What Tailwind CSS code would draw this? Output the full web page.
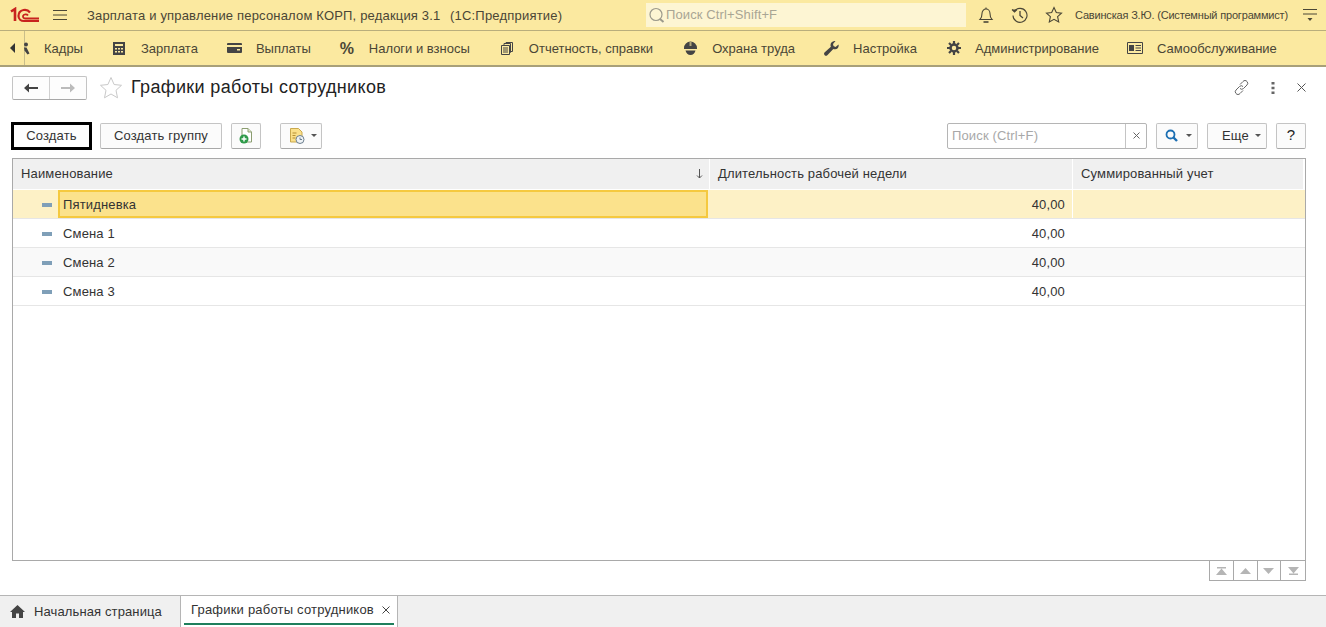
<!DOCTYPE html>
<html lang="ru">
<head>
<meta charset="UTF-8">
<title>Графики работы сотрудников</title>
<script src="https://cdn.jsdelivr.net/npm/@tailwindcss/browser@4"></script>
</head>
<body class="w-[1326px] h-[627px] overflow-hidden bg-white font-['Liberation_Sans',Arial,sans-serif] text-[13px] text-[#333] flex flex-col">

<!-- top bar -->
<header class="h-[31px] shrink-0 bg-[#fbe9a0] border-b border-[#b9ae7c] flex items-center text-[#4a4636]">
  <svg class="ml-[10px] w-[30px] h-[16px]" viewBox="0 0 30 16" fill="none"><path d="M1 4.500 5 2v12" stroke="#c8231e" stroke-width="2.600"/><path d="M20 5.500C18.500 3.500 16 2.500 13.500 3 10.500 3.600 8.500 6 8.500 9c0 3 2.500 5 5.500 5h15" stroke="#c8231e" stroke-width="2.200"/><path d="M18 8.500c-1-1.500-4.500-1.500-5 .5-.3 1.500 1 2.500 2.500 2.500H29" stroke="#c8231e" stroke-width="1.800"/></svg>
  <svg class="ml-[12px] w-[16px] h-[12px]" viewBox="0 0 16 12" stroke="#4a4636" stroke-width="1"><path d="M1 1.500h14M1 6h14M1 10.500h14"/></svg>
  <span class="ml-[19px] w-[353px] pt-[2px] whitespace-nowrap tracking-[0.18px]">Зарплата и управление персоналом КОРП, редакция 3.1</span>
  <span class="ml-[10px] w-[196px] pt-[2px] whitespace-nowrap tracking-[0.2px]">(1С:Предприятие)</span>
  <div class="w-[320px] h-[24px] bg-[#fdf5d3] flex items-center text-[#a9a594] tracking-[0.12px]">
    <svg class="ml-[2px] w-[17px] h-[17px]" viewBox="0 0 17 17" fill="none"><circle cx="8" cy="7.500" r="6" stroke="#9c9a8c" stroke-width="1.200"/><path d="m12 12 3.500 3" stroke="#9c9a8c" stroke-width="2"/></svg>
    <span class="ml-[1px]">Поиск Ctrl+Shift+F</span>
  </div>
  <svg class="ml-[11px] w-[18px] h-[18px]" viewBox="0 0 18 18" fill="none" stroke="#4a4636" stroke-width="1.100"><path d="M3 13.500c1.500-1.500 2-3 2-6 0-2.500 1.800-4.500 4-4.500s4 2 4 4.500c0 3 .5 4.500 2 6z"/><path d="M9 1.500V3"/><path d="M6.500 16h5" stroke-width="1.600"/></svg>
  <svg class="ml-[16px] w-[18px] h-[18px]" viewBox="0 0 18 18" fill="none" stroke="#4a4636" stroke-width="1.100"><path d="M3.500 5A7 7 0 1 1 2 9.500"/><path d="M1 3.500 3.500 6 6 3.500" fill="#4a4636"/><path d="M9 5v4.500l3 2.500" stroke-width="1.300"/></svg>
  <svg class="ml-[16px] w-[18px] h-[18px]" viewBox="0 0 18 18" fill="none" stroke="#4a4636" stroke-width="1.100"><path d="m9 1.500 2.300 5 5.200.6-3.900 3.500 1.100 5.400L9 13.300 4.300 16l1.100-5.400L1.500 7.100l5.200-.6z"/></svg>
  <span class="ml-[12px] w-[215px] pt-[1px] text-[11px] whitespace-nowrap tracking-[-0.18px]">Савинская З.Ю. (Системный программист)</span>
  <svg class="ml-[12px] w-[16px] h-[14px]" viewBox="0 0 16 14"><path d="M1 1.500h14M1 6h14" stroke="#4a4636" fill="none"/><path d="m5.500 10 2.500 3 2.500-3z" fill="#4a4636"/></svg>
</header>

<!-- sections bar -->
<nav class="h-[36px] shrink-0 bg-[#fbe9a0] border-b-2 border-[#a8a079] flex items-center text-[#4a4636] whitespace-nowrap">
  <div class="w-[25px] h-full border-r border-[#c9be8a] flex items-center relative">
    <svg class="ml-[10px] w-[6px] h-[10px]" viewBox="0 0 6 10"><path d="M5 0v10L0 5z" fill="#333"/></svg>
    <svg class="absolute left-[24px] top-[11px] w-[6px] h-[13px]" viewBox="0 0 6 13"><circle cx="2" cy="2.500" r="2" fill="#444"/><path d="M0 5.500h2.500l3 6-2 1-3-4z" fill="#444"/></svg>
  </div>
  <span class="ml-[19px] pt-[2px]">Кадры</span>
  <svg class="ml-[30px] w-[12px] h-[13px]" viewBox="0 0 12 13"><path fill="#444" d="M0 0h12v13H0z"/><path fill="#fbe9a0" d="M2 2h8v2H2zM2 6h2v1.500H2zM5 6h2v1.500H5zM8 6h2v1.500H8zM2 9h2v1.500H2zM5 9h2v1.500H5zM8 9h2v1.500H8z"/></svg>
  <span class="ml-[16px] pt-[2px]">Зарплата</span>
  <svg class="ml-[29px] w-[15px] h-[10px]" viewBox="0 0 15 10"><path fill="#444" d="M0 1a1 1 0 0 1 1-1h13a1 1 0 0 1 1 1v1H0zM0 4h15v5a1 1 0 0 1-1 1H1a1 1 0 0 1-1-1z"/><path fill="#fbe9a0" d="M10 6h3v1.500h-3z"/></svg>
  <span class="ml-[14px] pt-[2px]">Выплаты</span>
  <span class="ml-[29px] w-[15px] pt-[2px] text-[16px] font-bold">%</span>
  <span class="ml-[14px] pt-[2px]">Налоги и взносы</span>
  <svg class="ml-[31px] w-[12px] h-[13px]" viewBox="0 0 12 13" fill="none" stroke="#444"><path d="M.5 3.500h8v9h-8zM3 3.500v-2h6.500v9H8.500M5 1.500V.5h6.500v9h-2M2 6h5M2 8h5M2 10h5"/></svg>
  <span class="ml-[16px] pt-[2px]">Отчетность, справки</span>
  <svg class="ml-[31px] w-[13px] h-[14px]" viewBox="0 0 13 14"><path fill="#444" d="M0 7a6.500 6.500 0 0 1 13 0v1H0zM1.500 9.500h10C11 12 9 14 6.500 14s-4.500-2-5-4.500z"/><path fill="#fbe9a0" d="M5.500 1h2v4h-2z" opacity=".6"/></svg>
  <span class="ml-[15px] pt-[2px]">Охрана труда</span>
  <svg class="ml-[29px] w-[15px] h-[15px]" viewBox="0 0 15 15"><path fill="#444" d="M14.500 3.500 11.500 6 9.500 5 9 3l2.500-3C9 -.3 6.500 1.500 6.500 4c0 .7.100 1.200.4 1.800L.5 11.500c-.8 1-.5 2.200.2 2.800.8.700 1.800.7 2.600 0l6-6.200c.7.200 1.200.3 1.900.2 2.500-.3 4-2.500 3.300-4.800z"/></svg>
  <span class="ml-[14px] pt-[2px]">Настройка</span>
  <svg class="ml-[30px] w-[14px] h-[14px]" viewBox="0 0 14 14"><circle cx="7" cy="7" r="3.500" fill="none" stroke="#444" stroke-width="2.500"/><path stroke="#444" stroke-width="2.200" d="M7 0v3M7 11v3M0 7h3M11 7h3M2 2l2 2M10 10l2 2M12 2l-2 2M4 10l-2 2"/></svg>
  <span class="ml-[14px] pt-[2px]">Администрирование</span>
  <svg class="ml-[28px] w-[16px] h-[12px]" viewBox="0 0 16 12" fill="none" stroke="#444"><path d="M.5.500h15v11H.5z"/><path fill="#444" stroke="none" d="M2 3h5v6H2z"/><path d="M8.500 3.500h5.500M8.500 6h5.500M8.500 8.500h5.500"/></svg>
  <span class="ml-[14px] pt-[2px]">Самообслуживание</span>
</nav>

<main class="flex-1 min-h-0 flex flex-col">
  <!-- title row -->
  <div class="h-[41px] shrink-0 flex items-center pl-[12px] pr-[20px]">
    <div class="w-[75px] h-[24px] border border-[#c4c4c4] border-b-[#a8a8a8] rounded-[2px] flex bg-[#fdfdfd]">
      <div class="w-[37px] flex items-center justify-center border-r border-[#d0d0d0]">
        <svg class="w-[14px] h-[10px]" viewBox="0 0 14 10"><path d="M0 5 5 .5V4h9v2H5v3.500z" fill="#444"/></svg>
      </div>
      <div class="flex-1 flex items-center justify-center">
        <svg class="w-[14px] h-[10px]" viewBox="0 0 14 10"><path d="M14 5 9 .5V4H0v2h9v3.500z" fill="#bbb"/></svg>
      </div>
    </div>
    <svg class="ml-[12px] w-[24px] h-[24px]" viewBox="0 0 24 24" fill="none" stroke="#c9c9c9"><path d="m12 1.500 3.100 7 7.400.8-5.500 5 1.500 7.500L12 18l-6.500 3.800L7 14.300l-5.500-5 7.400-.8z"/></svg>
    <h1 class="ml-[8px] text-[18px] text-[#222] whitespace-nowrap tracking-[0.35px]">Графики работы сотрудников</h1>
    <svg class="ml-auto w-[17px] h-[17px]" viewBox="0 0 17 17" fill="none" stroke="#666"><path d="M7 5.500 10 2.500a2.500 2.500 0 0 1 4 0 2.500 2.500 0 0 1 0 3.500l-3.500 3.500a2.500 2.500 0 0 1-3.500 0"/><path d="M10 11.500 7 14.500a2.500 2.500 0 0 1-4 0 2.500 2.500 0 0 1 0-3.500L6.500 7.500a2.500 2.500 0 0 1 3.500 0"/></svg>
    <svg class="ml-[21px] w-[4px] h-[12px]" viewBox="0 0 4 12"><path fill="#666" d="M.5 0h3v2.500h-3zM.5 4.700h3v2.500h-3zM.5 9.500h3V12h-3z"/></svg>
    <svg class="ml-[22px] w-[9px] h-[9px]" viewBox="0 0 9 9" stroke="#555"><path d="m.5.500 8 8M8.500.500l-8 8"/></svg>
  </div>

  <!-- toolbar -->
  <div class="h-[27px] mt-[14px] shrink-0 flex items-center pl-[11px] pr-[20px] tracking-[0.15px]">
    <button class="w-[81px] h-[28px] border-[3px] border-black bg-[#fdfdfd] text-[#333]">Создать</button>
    <button class="ml-[8px] w-[122px] h-[26px] border border-[#c4c4c4] border-b-[#a8a8a8] rounded-[2px] bg-[#fbfbfb]">Создать группу</button>
    <button class="ml-[9px] w-[30px] h-[26px] border border-[#c4c4c4] border-b-[#a8a8a8] rounded-[2px] bg-[#fbfbfb] flex items-center justify-center">
      <svg class="w-[14px] h-[16px]" viewBox="0 0 14 16"><path d="M3 .5h6l3.500 3.500v10H3z" fill="#fff" stroke="#8b9d70"/><path d="M9 .5V4h3.500" fill="#dfe8c8" stroke="#8b9d70"/><circle cx="5" cy="11" r="4.500" fill="#2e9a49"/><path d="M5 8.500v5M2.500 11h5" stroke="#fff" stroke-width="1.400"/></svg>
    </button>
    <button class="ml-[19px] w-[42px] h-[26px] border border-[#c4c4c4] border-b-[#a8a8a8] rounded-[2px] bg-[#fbfbfb] flex items-center pl-[8px]">
      <svg class="w-[16px] h-[16px]" viewBox="0 0 16 16"><path d="M1.500.5h8L13 4v10H1.500z" fill="#fbe08a" stroke="#c9a94e"/><path d="M3.500 5h4M3.500 7.500h3M3.500 10h3" stroke="#b58f35"/><circle cx="11" cy="11.500" r="4" fill="#eef2f5" stroke="#6d7f8f"/><path d="M11 9.500v2h2" fill="none" stroke="#6d7f8f"/></svg>
      <svg class="ml-[6px] w-[6px] h-[3px]" viewBox="0 0 6 3"><path d="M0 0h6L3 3z" fill="#555"/></svg>
    </button>
    <div class="ml-auto w-[200px] h-[26px] border border-[#b5b5b5] rounded-[2px] flex items-center">
      <span class="flex-1 pl-[4px] text-[#a8a8a8]">Поиск (Ctrl+F)</span>
      <span class="w-[21px] h-full border-l border-[#c4c4c4] flex items-center justify-center">
        <svg class="w-[7px] h-[7px]" viewBox="0 0 7 7" stroke="#666"><path d="m.5.500 6 6M6.500.500l-6 6"/></svg>
      </span>
    </div>
    <button class="ml-[9px] w-[42px] h-[26px] border border-[#c4c4c4] border-b-[#a8a8a8] rounded-[2px] bg-[#fbfbfb] flex items-center pl-[8px]">
      <svg class="w-[13px] h-[13px]" viewBox="0 0 13 13" fill="none" stroke="#1c6fb3"><circle cx="5.500" cy="5.500" r="4" stroke-width="1.800"/><path d="m8.500 8.500 3.500 3.500" stroke-width="2.400"/></svg>
      <svg class="ml-[8px] w-[6px] h-[3px]" viewBox="0 0 6 3"><path d="M0 0h6L3 3z" fill="#555"/></svg>
    </button>
    <button class="ml-[9px] w-[60px] h-[26px] border border-[#c4c4c4] border-b-[#a8a8a8] rounded-[2px] bg-[#fbfbfb] flex items-center pl-[14px]">
      <span>Еще</span>
      <svg class="ml-[6px] w-[6px] h-[3px]" viewBox="0 0 6 3"><path d="M0 0h6L3 3z" fill="#555"/></svg>
    </button>
    <button class="ml-[9px] w-[30px] h-[26px] border border-[#c4c4c4] border-b-[#a8a8a8] rounded-[2px] bg-[#fbfbfb] text-[15px] text-[#222]">?</button>
  </div>

  <!-- table -->
  <div class="ml-[12px] mr-[20px] mt-[9px] h-[403px] shrink-0 border border-[#a9a9a9] flex flex-col tracking-[0.15px]">
    <div class="h-[31px] shrink-0 grid grid-cols-[697px_363px_1fr] bg-[#f0f0f0] border-b border-white">
      <div class="flex items-center pl-[8px] pr-[6px] border-r border-white">Наименование
        <svg class="ml-auto w-[7px] h-[10px]" viewBox="0 0 7 10" fill="none" stroke="#555"><path d="M3.500 0v9M1 6.500 3.500 9 6 6.500"/></svg>
      </div>
      <div class="flex items-center pl-[8px] border-r border-white">Длительность рабочей недели</div>
      <div class="flex items-center pl-[8px] border-r-2 border-white">Суммированный учет</div>
    </div>

    <div class="h-[29px] shrink-0 grid grid-cols-[697px_363px_1fr] bg-[#fdf1c6] border-b border-[#e6e6e6]">
      <div class="flex items-center pl-[29px]">
        <span class="w-[10px] h-[4px] mt-[2px] bg-[#7f9fb8] mr-[6px]"></span>
        <span class="h-full flex-1 bg-[#fbe28c] border-2 border-[#f5c93f] flex items-center pl-[2px] pt-[2px] mr-[2px] indent-px">Пятидневка</span>
      </div>
      <div class="flex items-center justify-end pt-[2px] pr-[7px] border-r border-white">40,00</div>
      <div></div>
    </div>
    <div class="h-[29px] shrink-0 grid grid-cols-[697px_363px_1fr] border-b border-[#e6e6e6]">
      <div class="flex items-center pt-[2px] pl-[29px]"><span class="w-[10px] h-[4px] bg-[#7f9fb8] mr-[11px]"></span>Смена 1</div>
      <div class="flex items-center justify-end pt-[2px] pr-[8px]">40,00</div>
      <div></div>
    </div>
    <div class="h-[29px] shrink-0 grid grid-cols-[697px_363px_1fr] bg-[#f9f9f9] border-b border-[#e6e6e6]">
      <div class="flex items-center pt-[2px] pl-[29px]"><span class="w-[10px] h-[4px] bg-[#7f9fb8] mr-[11px]"></span>Смена 2</div>
      <div class="flex items-center justify-end pt-[2px] pr-[8px]">40,00</div>
      <div></div>
    </div>
    <div class="h-[29px] shrink-0 grid grid-cols-[697px_363px_1fr] border-b border-[#e6e6e6]">
      <div class="flex items-center pt-[2px] pl-[29px]"><span class="w-[10px] h-[4px] bg-[#7f9fb8] mr-[11px]"></span>Смена 3</div>
      <div class="flex items-center justify-end pt-[2px] pr-[8px]">40,00</div>
      <div></div>
    </div>
  </div>

  <!-- pager -->
  <div class="mr-[20px] self-end w-[97px] h-[20px] shrink-0 border border-t-0 border-[#a9a9a9] grid grid-cols-4 divide-x divide-[#a9a9a9]">
    <div class="flex items-center justify-center"><svg class="w-[11px] h-[8px]" viewBox="0 0 11 8" fill="#b5b5b5"><path d="M1 0h9v1.500H1zM5.500 1.500 11 8H0z"/></svg></div>
    <div class="flex items-center justify-center"><svg class="w-[11px] h-[6px]" viewBox="0 0 11 6" fill="#b5b5b5"><path d="M5.500 0 11 6H0z"/></svg></div>
    <div class="flex items-center justify-center"><svg class="w-[11px] h-[6px]" viewBox="0 0 11 6" fill="#b5b5b5"><path d="M5.500 6 11 0H0z"/></svg></div>
    <div class="flex items-center justify-center"><svg class="w-[11px] h-[8px]" viewBox="0 0 11 8" fill="#b5b5b5"><path d="M1 8h9V6.500H1zM5.500 6.500 11 0H0z"/></svg></div>
  </div>
</main>

<!-- tabs -->
<footer class="h-[32px] shrink-0 bg-[#f0f0f0] border-t border-[#b5b5b5] flex items-stretch whitespace-nowrap">
  <div class="w-[180px] flex items-center tracking-[0.12px]">
    <svg class="ml-[10px] w-[15px] h-[13px]" viewBox="0 0 15 13"><path d="M7.500 0 15 7h-2v6H9V8.500H6V13H2V7H0z" fill="#444"/></svg>
    <span class="ml-[9px]">Начальная страница</span>
  </div>
  <div class="w-[218px] bg-white border-x border-[#b5b5b5] flex flex-col px-[3px] tracking-[0.2px]">
    <div class="flex-1 flex items-center pl-[7px]">Графики работы сотрудников
      <svg class="ml-[8px] w-[8px] h-[8px]" viewBox="0 0 8 8" stroke="#444"><path d="m.5.500 7 7M7.500.500l-7 7"/></svg>
    </div>
    <div class="h-[2px] mb-[2px] bg-[#1f7f5c]"></div>
  </div>
</footer>
</body>
</html>
